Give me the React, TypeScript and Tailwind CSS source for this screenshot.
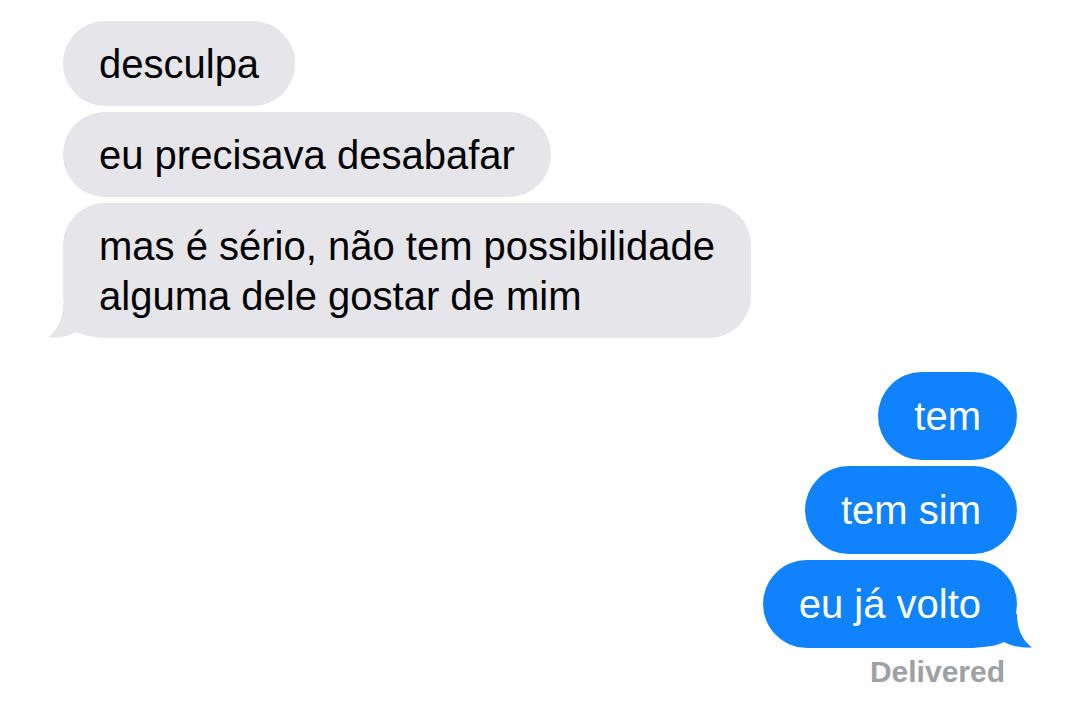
import React from "react";

const font = { fontFamily: '"Liberation Sans", Arial, sans-serif' };

function GrayTail() {
  return (
    <svg
      className="absolute bottom-0 left-[-15px]"
      width="56"
      height="34"
      viewBox="0 0 56 34"
    >
      <path
        d="M15 0 C15 16 9 27 0 33.5 C11 34 21 32 28 28 C34 31 42 33 56 33 L56 0 Z"
        fill="#e5e5ea"
      />
    </svg>
  );
}

function BlueTail() {
  return (
    <svg
      className="absolute bottom-0 right-[-15px]"
      width="56"
      height="34"
      viewBox="0 0 56 34"
    >
      <path
        d="M41 0 C41 16 47 27 56 33.5 C45 34 35 32 28 28 C22 31 14 33 0 33 L0 0 Z"
        fill="#0f82fd"
      />
    </svg>
  );
}

function Received({ children, tail }: { children: React.ReactNode; tail?: boolean }) {
  return (
    <div className="relative self-start rounded-[42px] bg-[#e5e5ea] px-[36px] py-[17.5px] text-[40px] leading-[50px] text-black">
      {tail && <GrayTail />}
      <span className="relative">{children}</span>
    </div>
  );
}

function Sent({ children, tail }: { children: React.ReactNode; tail?: boolean }) {
  return (
    <div className="relative self-end rounded-[44px] bg-[#0f82fd] px-[36px] py-[19px] text-[40px] leading-[50px] text-white">
      {tail && <BlueTail />}
      <span className="relative">{children}</span>
    </div>
  );
}

export default function App() {
  return (
    <div className="flex h-[708px] w-[1080px] flex-col bg-white pt-[21px]" style={font}>
      <div className="ml-[63px] flex flex-col gap-[6px]">
        <Received>desculpa</Received>
        <Received>eu precisava desabafar</Received>
        <Received tail>
          mas é sério, não tem possibilidade
          <br />
          alguma dele gostar de mim
        </Received>
      </div>

      <div className="mr-[63px] mt-[34px] flex flex-col gap-[6px]">
        <Sent>tem</Sent>
        <Sent>tem sim</Sent>
        <Sent tail>eu já volto</Sent>
      </div>

      <div className="mr-[75px] mt-[4px] self-end text-[30px] font-bold leading-[40px] text-[#a0a0a4]">
        Delivered
      </div>
    </div>
  );
}
